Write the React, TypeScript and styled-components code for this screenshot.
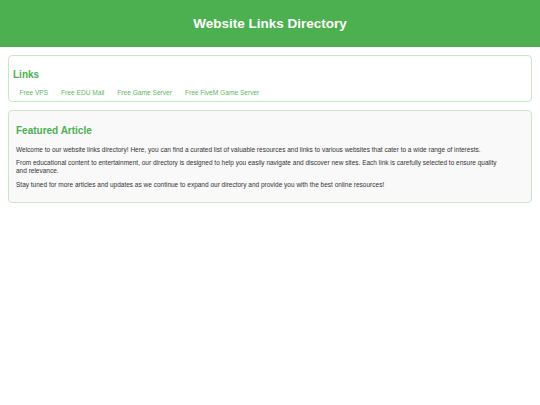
import React from "react"
import styled, { createGlobalStyle } from "styled-components"

const GlobalStyle = createGlobalStyle`
  html, body {
    margin: 0;
    padding: 0;
    background: #fff;
    font-family: "Liberation Sans", Arial, sans-serif;
  }
`

const links = ["Free VPS", "Free EDU Mail", "Free Game Server", "Free FiveM Game Server"]

const paragraphs = [
  "Welcome to our website links directory! Here, you can find a curated list of valuable resources and links to various websites that cater to a wide range of interests.",
  "From educational content to entertainment, our directory is designed to help you easily navigate and discover new sites. Each link is carefully selected to ensure quality and relevance.",
  "Stay tuned for more articles and updates as we continue to expand our directory and provide you with the best online resources!",
]

export default function App() {
  return (
    <>
      <GlobalStyle />
      <S.Header>
        <S.Title>Website Links Directory</S.Title>
      </S.Header>
      <S.Main>
        <S.Section>
          <S.Heading>Links</S.Heading>
          <S.LinkList>
            {links.map((l) => (
              <li key={l}>
                <S.Link href="#">{l}</S.Link>
              </li>
            ))}
          </S.LinkList>
        </S.Section>
        <S.Article>
          <S.ArticleHeading>Featured Article</S.ArticleHeading>
          {paragraphs.map((p, i) => (
            <S.Paragraph key={i}>{p}</S.Paragraph>
          ))}
        </S.Article>
      </S.Main>
    </>
  )
}

const S = {
  Header: styled.header`
    display: flex;
    align-items: center;
    justify-content: center;
    height: 47px;
    background-color: #4caf50;
  `,
  Title: styled.h1`
    margin: 0;
    color: #fff;
    font-size: 13.5px;
    font-weight: bold;
  `,
  Main: styled.main`
    display: flex;
    flex-direction: column;
    gap: 8px;
    padding: 8px;
  `,
  Section: styled.section`
    border: 1px solid #c8e6c9;
    border-radius: 4px;
    padding: 0 4px 4px;
  `,
  Heading: styled.h2`
    margin: 13px 0 7px;
    color: #4caf50;
    font-size: 10px;
    line-height: 12px;
  `,
  LinkList: styled.ul`
    display: flex;
    margin: 0;
    padding: 0;
    list-style: none;
  `,
  Link: styled.a`
    display: block;
    padding: 0 6.5px;
    color: #5cb860;
    font-size: 6.6px;
    line-height: 9px;
    text-decoration: none;
  `,
  Article: styled.article`
    border: 1px solid #c8e6c9;
    border-radius: 4px;
    background-color: #f9f9f9;
    padding: 14px 24px 12.5px 7px;
  `,
  ArticleHeading: styled.h2`
    margin: 0 0 8.5px;
    color: #4caf50;
    font-size: 10px;
    line-height: 12px;
  `,
  Paragraph: styled.p`
    margin: 0 0 5.3px;
    color: #333;
    font-size: 6.5px;
    line-height: 8.3px;

    &:last-child {
      margin-bottom: 0;
    }
  `,
}
